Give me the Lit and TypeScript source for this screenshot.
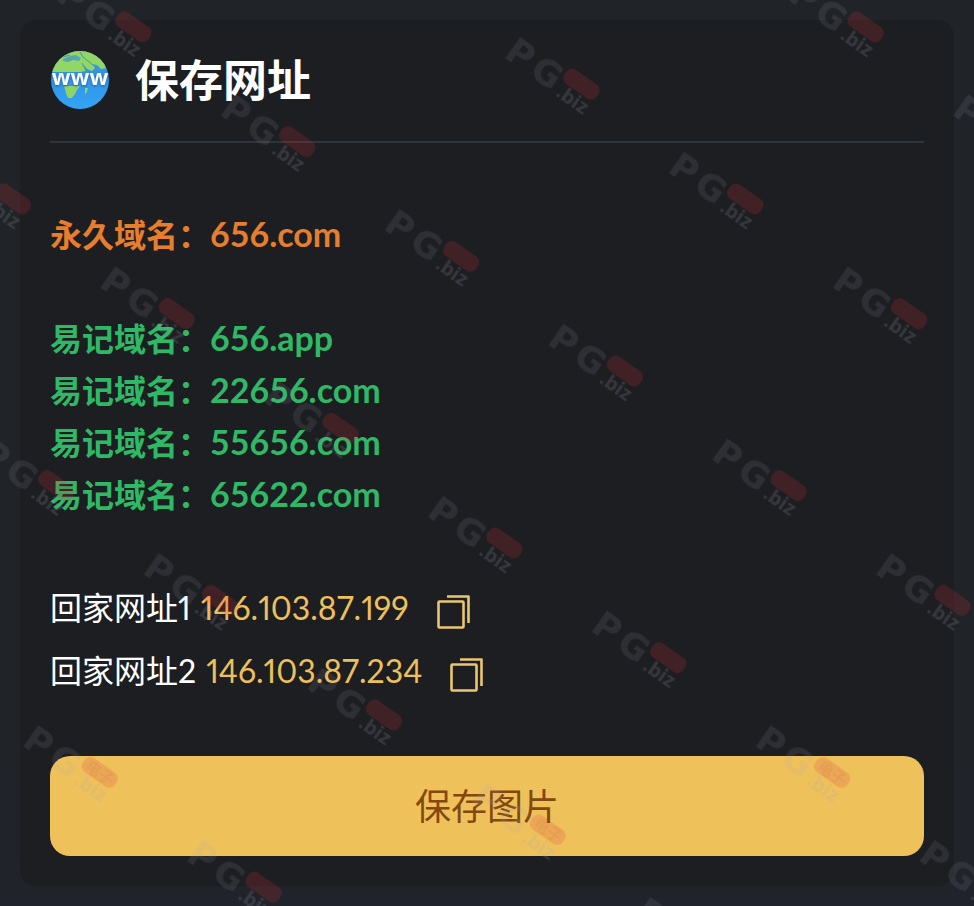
import { LitElement, html, css } from "lit";
import { customElement } from "lit/decorators.js";

@customElement("globe-icon")
class GlobeIcon extends LitElement {
  static styles = css`
    :host { display: block; flex: none; width: 60px; height: 60px; }
    svg { display: block; width: 100%; height: 100%; }
    .www { font: 700 22px "Open Sans", "Noto Sans", sans-serif; fill: #fff; filter: drop-shadow(0 1px 1px #1f5f9c); }
  `;
  render() {
    return html`<svg viewBox="0 0 60 60" aria-hidden="true">
      <defs>
        <linearGradient id="sea" x1="0" y1="0" x2="0" y2="1">
          <stop offset="0" stop-color="#4a9ccc" />
          <stop offset="0.4" stop-color="#2f93e6" />
          <stop offset="1" stop-color="#35a4f4" />
        </linearGradient>
        <clipPath id="ball"><circle cx="30" cy="30" r="29" /></clipPath>
      </defs>
      <g clip-path="url(#ball)">
        <rect width="60" height="60" fill="url(#sea)" />
        <path d="M0 22C4 10 12 4 22 0L38 0L46 4L54 12L56 18L51 19L47 15L42 14L45 18L42 21L37 19L34 15L36 21L30 22Z" fill="#93d668" />
        <path d="M13 9L20 6L26 5L31 8L29 11L23 10L18 12L13 11Z" fill="#55a9ac" />
        <path d="M30 2L33 7L38 11L43 15M20 5L13 7M32 13L36 21" fill="none" stroke="#3f98a8" />
        <path d="M14 36H30L27 40L25 44L22 48L18 48L16 43ZM35 38H38L37 42L35 44Z" fill="#8fd466" />
      </g>
      <text class="www" x="30" y="35" text-anchor="middle">www</text>
    </svg>`;
  }
}

@customElement("brand-watermark")
class BrandWatermark extends LitElement {
  static styles = css`
    :host { position: absolute; inset: 0; pointer-events: none; }
    svg { display: block; width: 100%; height: 100%; }
    .big { font: 700 36px "DejaVu Sans", sans-serif; fill: #a0a4b4; fill-opacity: 0.13; }
    .small { font: 700 20px "Open Sans", sans-serif; fill: #a0a4b4; fill-opacity: 0.19; }
    .badge { fill: #e22a3a; fill-opacity: 0.18; }
    .cn { font: 700 15px "Noto Sans CJK SC", sans-serif; fill: #1e1e22; fill-opacity: 0.06; }
  `;
  render() {
    return html`<svg aria-hidden="true">
      <defs>
        <pattern id="mark" width="200" height="210" patternUnits="userSpaceOnUse" patternTransform="translate(517 36) rotate(35) translate(-20 -20)">
          <text class="big" x="20" y="45">P</text>
          <text class="big" x="51" y="45">G</text>
          <rect class="badge" x="81" y="14" width="39" height="17" rx="7" />
          <text class="cn" x="86" y="28">电子</text>
          <text class="small" x="85" y="47">.biz</text>
        </pattern>
      </defs>
      <rect width="100%" height="100%" fill="url(#mark)" />
    </svg>`;
  }
}

@customElement("app-root")
class AppRoot extends LitElement {
  static styles = css`
    :host {
      display: block; position: relative; overflow: hidden; box-sizing: border-box;
      min-height: 100vh; padding: 20px; background: linear-gradient(#202428 80%, #20232b);
      font-family: Lato, "Noto Sans CJK SC", sans-serif; color: #fff;
    }
    .card { padding: 30px; border-radius: 16px; background: #1d1e22; }
    header { display: flex; align-items: center; gap: 25px; padding-bottom: 31px; border-bottom: 2px solid #2d343c; }
    h1 { margin: 0; font-size: 44px; line-height: 60px; font-weight: 700; }
    .domains { display: grid; gap: 52px; padding-top: 66px; font-size: 32px; line-height: 52px; font-weight: 700; }
    p { margin: 0; }
    .latin { font-size: 34px; line-height: 32px; }
    .permanent { color: #e67e2e; }
    .easy { color: #2fb966; }
    .home { display: grid; margin: 55px 0 54px; font-size: 32px; line-height: 63px; }
    .row { display: flex; align-items: center; }
    .num { font-size: 32px; line-height: 32px; font-variant-numeric: proportional-nums; font-kerning: none; }
    .ip { margin-left: 10px; color: #edc05a; }
    .copy { margin: 8px 0 0 28px; padding: 0; border: 0; background: none; color: #ebc672; cursor: pointer; }
    .copy svg { display: block; width: 33px; height: 36px; }
    .save {
      display: block; width: 100%; height: 100px; padding: 0 0 4px; border: 0; border-radius: 20px;
      background: #efc15b; color: #84480f; font: inherit; font-size: 36px; cursor: pointer;
    }
  `;
  private easy = ["656.app", "22656.com", "55656.com", "65622.com"];
  private home = ["146.103.87.199", "146.103.87.234"];
  render() {
    return html`
      <main class="card">
        <header><globe-icon></globe-icon><h1>保存网址</h1></header>
        <section class="domains">
          <p class="permanent">永久域名：<span class="latin">656.com</span></p>
          <div class="easy">${this.easy.map((d) => html`<p>易记域名：<span class="latin">${d}</span></p>`)}</div>
        </section>
        <section class="home">
          ${this.home.map((ip, i) => html`<div class="row">
            <span>回家网址<span class="num">${i + 1}</span></span><span class="ip num">${ip}</span>
            <button class="copy" type="button" aria-label="复制 ${ip}" @click=${() => navigator.clipboard?.writeText(ip)}>
              <svg viewBox="0 0 33 36" fill="none" stroke="currentColor" stroke-width="2.6" stroke-linejoin="round">
                <rect x="1.5" y="7.5" width="25" height="26" rx="1" /><path d="M10 2.5H31.5V29" />
              </svg>
            </button>
          </div>`)}
        </section>
        <button class="save" type="button">保存图片</button>
      </main>
      <brand-watermark></brand-watermark>
    `;
  }
}
